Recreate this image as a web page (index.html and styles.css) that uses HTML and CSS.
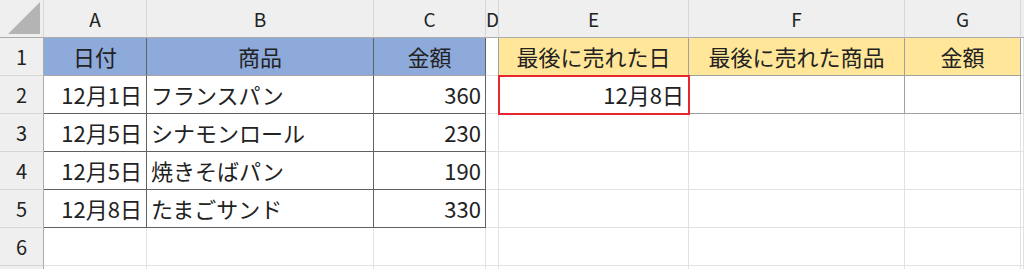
FILE: index.html
```html
<!DOCTYPE html>
<html lang="ja">
<head>
    <meta charset="UTF-8">
    <meta name="viewport" content="width=device-width, initial-scale=1.0">
    <title>売上シート</title>
    <link rel="stylesheet" href="styles.css">
</head>
<body>
    <table class="sheet">
        <colgroup>
            <col class="w-head">
            <col class="w-a">
            <col class="w-b">
            <col class="w-c">
            <col class="w-d">
            <col class="w-e">
            <col class="w-f">
            <col class="w-g">
            <col>
        </colgroup>
        <tr class="col-heads">
            <th class="corner"><span class="tri"></span></th>
            <th>A</th>
            <th>B</th>
            <th>C</th>
            <th>D</th>
            <th>E</th>
            <th>F</th>
            <th>G</th>
            <th class="rest"></th>
        </tr>
        <tr>
            <th class="row-head">1</th>
            <td class="blue dark-r dark-b center">日付</td>
            <td class="blue dark-r dark-b center">商品</td>
            <td class="blue dark-r dark-b center">金額</td>
            <td class="edge-r"></td>
            <td class="yellow edge-r edge-b center">最後に売れた日</td>
            <td class="yellow edge-r edge-b center">最後に売れた商品</td>
            <td class="yellow edge-r edge-b center">金額</td>
            <td></td>
        </tr>
        <tr>
            <th class="row-head">2</th>
            <td class="dark-r dark-b num">12月1日</td>
            <td class="dark-r dark-b">フランスパン</td>
            <td class="dark-r dark-b num">360</td>
            <td class="edge-r"></td>
            <td class="edge-r edge-b num picked">12月8日</td>
            <td class="edge-r edge-b"></td>
            <td class="edge-r edge-b"></td>
            <td></td>
        </tr>
        <tr>
            <th class="row-head">3</th>
            <td class="dark-r dark-b num">12月5日</td>
            <td class="dark-r dark-b">シナモンロール</td>
            <td class="dark-r dark-b num">230</td>
            <td></td>
            <td></td>
            <td></td>
            <td></td>
            <td></td>
        </tr>
        <tr>
            <th class="row-head">4</th>
            <td class="dark-r dark-b num">12月5日</td>
            <td class="dark-r dark-b">焼きそばパン</td>
            <td class="dark-r dark-b num">190</td>
            <td></td>
            <td></td>
            <td></td>
            <td></td>
            <td></td>
        </tr>
        <tr>
            <th class="row-head">5</th>
            <td class="dark-r dark-b num">12月8日</td>
            <td class="dark-r dark-b">たまごサンド</td>
            <td class="dark-r dark-b num">330</td>
            <td></td>
            <td></td>
            <td></td>
            <td></td>
            <td></td>
        </tr>
        <tr>
            <th class="row-head">6</th>
            <td></td>
            <td></td>
            <td></td>
            <td></td>
            <td></td>
            <td></td>
            <td></td>
            <td></td>
        </tr>
        <tr>
            <th class="row-head"></th>
            <td></td>
            <td></td>
            <td></td>
            <td></td>
            <td></td>
            <td></td>
            <td></td>
            <td></td>
        </tr>
    </table>
</body>
</html>
```

FILE: styles.css
```css
html, body {
    height: 269px;
}

body {
    margin: 0;
    background-color: #fff;
    font-family: "Noto Sans CJK JP", "Noto Sans", sans-serif;
    color: #222;
    overflow: hidden;
}

.sheet {
    table-layout: fixed;
    border-collapse: separate;
    border-spacing: 0;
    width: 1024px;
}

.w-head { width: 44px; }
.w-a { width: 103px; }
.w-b { width: 227px; }
.w-c { width: 112px; }
.w-d { width: 13px; }
.w-e { width: 190px; }
.w-f { width: 216px; }
.w-g { width: 116px; }

td, th {
    height: 38px;
    padding: 0 4px;
    border-right: 1px solid #e1e1e1;
    border-bottom: 1px solid #e1e1e1;
    font-size: 22px;
    font-weight: normal;
    white-space: nowrap;
    overflow: hidden;
    line-height: 37px;
    box-sizing: border-box;
}

/* column letters along the top */
.col-heads th {
    background-color: #efefef;
    border-right: 1px solid #d6d6d6;
    border-bottom: 1px solid #ababab;
    font-size: 19px;
    text-align: center;
    padding: 0;
}

.col-heads th.rest {
    border-right: none;
}

.corner {
    position: relative;
}

.corner .tri {
    position: absolute;
    right: 3px;
    bottom: 3px;
    width: 0;
    height: 0;
    border-left: 32px solid transparent;
    border-bottom: 32px solid #b4b4b4;
}

/* row numbers down the left */
.row-head {
    background-color: #efefef;
    border-right: 1px solid #ababab;
    border-bottom: 1px solid #d6d6d6;
    text-align: center;
    font-size: 20px;
    padding: 0;
}

.center { text-align: center; }
.num { text-align: right; }

.blue { background-color: #8eaadb; }
.yellow { background-color: #ffe699; }

.dark-r { border-right-color: #616161; }
.dark-b { border-bottom-color: #616161; }
.blue.dark-b { border-bottom-color: #a5a5a5; }

.edge-r { border-right-color: #a0a0a0; }
.edge-b { border-bottom-color: #a0a0a0; }

.picked {
    outline: 2px solid #e8262d;
    outline-offset: -1px;
}
```
